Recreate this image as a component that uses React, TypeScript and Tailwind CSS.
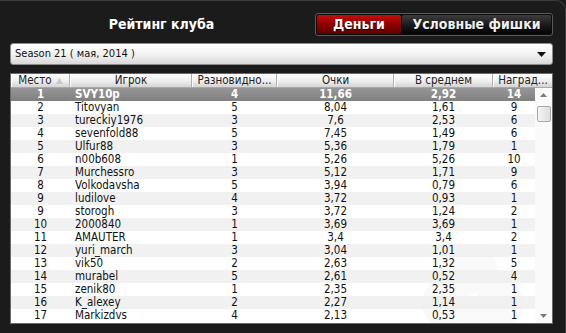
import React from "react";

const rows: [string, string, string, string, string, string][] = [
  ["1", "SVY10p", "4", "11,66", "2,92", "14"],
  ["2", "Titovyan", "5", "8,04", "1,61", "9"],
  ["3", "tureckiy1976", "3", "7,6", "2,53", "6"],
  ["4", "sevenfold88", "5", "7,45", "1,49", "6"],
  ["5", "Ulfur88", "3", "5,36", "1,79", "1"],
  ["6", "n00b608", "1", "5,26", "5,26", "10"],
  ["7", "Murchessro", "3", "5,12", "1,71", "9"],
  ["8", "Volkodavsha", "5", "3,94", "0,79", "6"],
  ["9", "ludilove", "4", "3,72", "0,93", "1"],
  ["9", "storogh", "3", "3,72", "1,24", "2"],
  ["10", "2000840", "1", "3,69", "3,69", "1"],
  ["11", "AMAUTER", "1", "3,4", "3,4", "2"],
  ["12", "yuri_march", "3", "3,04", "1,01", "1"],
  ["13", "vik50", "2", "2,63", "1,32", "5"],
  ["14", "murabel", "5", "2,61", "0,52", "4"],
  ["15", "zenik80", "1", "2,35", "2,35", "1"],
  ["16", "K_alexey", "2", "2,27", "1,14", "1"],
  ["17", "Markizdvs", "4", "2,13", "0,53", "1"],
];

const font = "font-['DejaVu_Sans',sans-serif] [font-stretch:condensed]";

function HeaderCell({ w, children, last }: { w: string; children: React.ReactNode; last?: boolean }) {
  return (
    <div
      className={`${w} h-full flex items-center justify-center bg-gradient-to-b from-[#ffffff] via-[#f1f1f1] to-[#d4d4d4] text-[#222] text-[11.5px] ${
        last ? "" : "border-r border-r-[#b0b0b0]"
      } border-l border-l-white`}
    >
      {children}
    </div>
  );
}

export default function App() {
  return (
    <div className={`w-[566px] h-[333px] bg-[#1b1b1b] overflow-hidden ${font}`}>
      <div className="h-full border-t border-r border-[#3c3c3c] rounded-tr-[10px] pl-[10px] pr-[12px] pt-[12px]">
        {/* top row */}
        <div className="flex h-[23px] items-center">
          <div className="flex-1 text-center text-white font-bold text-[14px] pb-[1px] pr-[2px]">Рейтинг клуба</div>
          <div className="w-[238px] h-[23px] flex rounded-[3px] border border-[#5a5a5a] bg-[#0c0c0c] p-[1px] gap-[1px]">
            <div className="w-[84px] h-full flex items-center justify-center rounded-[2px] bg-gradient-to-b from-[#c21010] via-[#8f0000] to-[#5a0000] text-white font-bold text-[14px] [text-shadow:0_1px_1px_#000]">
              Деньги
            </div>
            <div className="flex-1 h-full flex items-center justify-center rounded-[2px] bg-gradient-to-b from-[#3d3d3d] via-[#1c1c1c] to-[#050505] text-[#f0f0f0] font-bold text-[14px] [text-shadow:0_1px_1px_#000]">
              Условные фишки
            </div>
          </div>
        </div>

        {/* dropdown */}
        <div className="mt-[7px] h-[22px] flex items-center justify-between rounded-[3px] border border-[#8c8c8c] bg-gradient-to-b from-[#ffffff] via-[#f3f3f3] to-[#d9d9d9] pl-[4px] pr-[6px]">
          <span className="text-[11px] text-[#111]">Season 21 ( мая, 2014 )</span>
          <svg width="9" height="5" viewBox="0 0 9 5">
            <path d="M0 0 L9 0 L4.5 5 Z" fill="#111" />
          </svg>
        </div>

        {/* table */}
        <div className="mt-[8px] h-[251px] border border-[#6a6a6a] bg-white flex flex-col overflow-hidden">
          <div className="h-[14px] flex shrink-0 border-b border-b-[#a8a8a8]">
            <HeaderCell w="w-[59px]">
              <span>Место</span>
              <svg className="ml-[4px]" width="7" height="6" viewBox="0 0 7 6">
                <path d="M0 6 L3.5 0 L7 6 Z" fill="#c8c8c8" />
              </svg>
            </HeaderCell>
            <HeaderCell w="w-[122px]">Игрок</HeaderCell>
            <HeaderCell w="w-[85px]">Разновидно...</HeaderCell>
            <HeaderCell w="w-[117px]">Очки</HeaderCell>
            <HeaderCell w="w-[99px]">В среднем</HeaderCell>
            <HeaderCell w="flex-1" last>
              Наград...
            </HeaderCell>
          </div>
          <div className="flex-1 flex relative">
            <svg
              className="absolute right-[24px] bottom-[-34px]"
              width="110"
              height="120"
              viewBox="0 0 110 120"
            >
              <g fill="#000" opacity="0.02">
                <circle cx="55" cy="32" r="24" />
                <circle cx="28" cy="66" r="24" />
                <circle cx="82" cy="66" r="24" />
                <path d="M48 60 L62 60 L72 118 L38 118 Z" />
              </g>
            </svg>
            <div className="flex-1 flex flex-col relative">
              {rows.map((r, i) => {
                const sel = i === 0;
                const bg = sel
                  ? "bg-gradient-to-b from-[#969696] to-[#808080] text-white font-bold"
                  : i % 2 === 0
                  ? "bg-[#eeeeee]/80 text-[#111]"
                  : "text-[#111]";
                return (
                  <div key={i} className={`h-[13px] shrink-0 flex items-center text-[11.5px] leading-none ${bg}`}>
                    <div className="w-[59px] text-center">{r[0]}</div>
                    <div className="w-[122px] pl-[5px]">{r[1]}</div>
                    <div className="w-[85px] text-center">{r[2]}</div>
                    <div className="w-[117px] text-center">{r[3]}</div>
                    <div className="w-[99px] text-center">{r[4]}</div>
                    <div className="flex-1 text-center">{r[5]}</div>
                  </div>
                );
              })}
            </div>
            <div className="w-[17px] shrink-0 relative flex flex-col items-center bg-[#fafafa]/90">
              <div className="h-[14px] w-full flex items-center justify-center">
                <svg width="7" height="4" viewBox="0 0 7 4">
                  <path d="M0 4 L3.5 0 L7 4 Z" fill="#7a7a7a" />
                </svg>
              </div>
              <div className="mt-[4px] w-[14px] h-[16px] rounded-[2px] border border-[#a9a9a9] bg-gradient-to-r from-[#f6f6f6] to-[#dedede]" />
              <div className="flex-1" />
              <div className="h-[14px] w-full flex items-center justify-center">
                <svg width="7" height="4" viewBox="0 0 7 4">
                  <path d="M0 0 L7 0 L3.5 4 Z" fill="#7a7a7a" />
                </svg>
              </div>
            </div>
          </div>
        </div>
      </div>
    </div>
  );
}
